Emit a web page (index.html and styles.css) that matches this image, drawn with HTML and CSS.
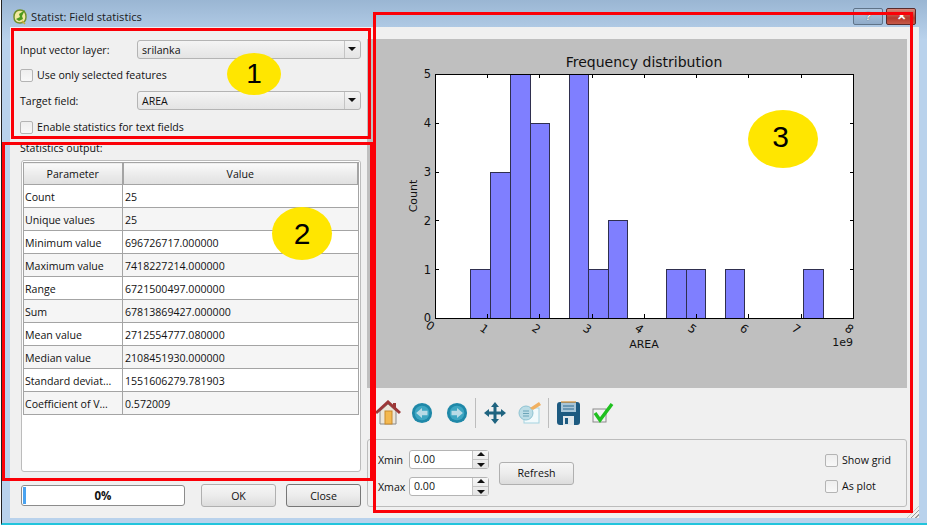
FILE: index.html
```html
<!DOCTYPE html>
<html lang="en">
<head>
<meta charset="utf-8">
<title>Statist: Field statistics</title>
<link rel="stylesheet" href="styles.css">
</head>
<body>
<div class="window">
  <header class="titlebar">
    <svg class="app-icon" width="14" height="16" viewBox="0 0 14 16">
      <path d="M7 1 C3 1 1 4 1 8 C1 12 3 14 7 14 C11 14 13 12 13 8 C13 4 11 1 7 1Z" fill="#f2e9a0" stroke="#6f8f2a" stroke-width="1.4"/>
      <path d="M3 10 L7 8 L6 5 L12 1 L9 7 L10 10 L6 12Z" fill="#4d9a1e"/>
      <path d="M9 12 L12 15" stroke="#c9b23a" stroke-width="1.6"/>
    </svg>
    <span class="title-text">Statist: Field statistics</span>
    <div class="caption-buttons">
      <div class="cap-btn cap-help">?</div>
      <div class="cap-btn cap-close">✕</div>
    </div>
  </header>
  <main class="content">
    <section class="left">
      <div class="form-row row-first">
        <label class="form-label">Input vector layer:</label>
        <div class="combo"><span class="combo-text">srilanka</span><span class="combo-arrow"></span></div>
      </div>
      <div class="check-row row-check1"><span class="check"></span><span>Use only selected features</span></div>
      <div class="form-row row-target">
        <label class="form-label">Target field:</label>
        <div class="combo"><span class="combo-text">AREA</span><span class="combo-arrow"></span></div>
      </div>
      <div class="check-row row-check2"><span class="check"></span><span>Enable statistics for text fields</span></div>
      <div class="stats-label">Statistics output:</div>
      <div class="table-frame">
        <table class="stats">
          <colgroup><col class="col-param"><col class="col-value"></colgroup>
          <thead><tr><th>Parameter</th><th>Value</th></tr></thead>
          <tbody>
            <tr><td>Count</td><td>25</td></tr>
            <tr><td>Unique values</td><td>25</td></tr>
            <tr><td>Minimum value</td><td>696726717.000000</td></tr>
            <tr><td>Maximum value</td><td>7418227214.000000</td></tr>
            <tr><td>Range</td><td>6721500497.000000</td></tr>
            <tr><td>Sum</td><td>67813869427.000000</td></tr>
            <tr><td>Mean value</td><td>2712554777.080000</td></tr>
            <tr><td>Median value</td><td>2108451930.000000</td></tr>
            <tr><td>Standard deviat...</td><td>1551606279.781903</td></tr>
            <tr><td>Coefficient of V...</td><td>0.572009</td></tr>
          </tbody>
        </table>
      </div>
      <div class="actions">
        <div class="progress"><span class="progress-fill"></span><span class="progress-text">0%</span></div>
        <button class="btn btn-ok">OK</button>
        <button class="btn btn-close">Close</button>
      </div>
    </section>
    <section class="right">
      <div class="plot">
        <svg class="chart" width="540" height="349" viewBox="367 39 540 349">
          <text class="t-title" x="644" y="67" text-anchor="middle">Frequency distribution</text>
          <rect x="435.5" y="74.5" width="418" height="244" fill="#fff"/>
          <g class="bars">
            <rect x="470.5" y="269.5" width="20" height="49"/>
            <rect x="490.5" y="172.5" width="20" height="146"/>
            <rect x="510.5" y="74.5" width="20" height="244"/>
            <rect x="530.5" y="123.5" width="19" height="195"/>
            <rect x="569.5" y="74.5" width="19" height="244"/>
            <rect x="588.5" y="269.5" width="20" height="49"/>
            <rect x="608.5" y="220.5" width="19" height="98"/>
            <rect x="666.5" y="269.5" width="20" height="49"/>
            <rect x="686.5" y="269.5" width="19" height="49"/>
            <rect x="725.5" y="269.5" width="19" height="49"/>
            <rect x="803.5" y="269.5" width="20" height="49"/>
          </g>
          <rect x="435.5" y="74.5" width="418" height="244" fill="none" stroke="#000" stroke-width="1"/>
          <path class="ticks" d="M487.5 318v-4M539.5 318v-4M592.5 318v-4M644.5 318v-4M696.5 318v-4M748.5 318v-4M801.5 318v-4M487.5 74v4M539.5 74v4M592.5 74v4M644.5 74v4M696.5 74v4M748.5 74v4M801.5 74v4M435 269.5h4M435 220.5h4M435 172.5h4M435 123.5h4M854 269.5h-4M854 220.5h-4M854 172.5h-4M854 123.5h-4"/>
          <g class="t-axis" text-anchor="end">
            <text x="431" y="78">5</text>
            <text x="431" y="127">4</text>
            <text x="431" y="176">3</text>
            <text x="431" y="225">2</text>
            <text x="431" y="274">1</text>
            <text x="431" y="322">0</text>
          </g>
          <g class="t-axis" text-anchor="middle">
            <text transform="translate(428 329) rotate(35)">0</text>
            <text transform="translate(482 332) rotate(35)">1</text>
            <text transform="translate(534 332) rotate(35)">2</text>
            <text transform="translate(585 332) rotate(35)">3</text>
            <text transform="translate(637 332) rotate(35)">4</text>
            <text transform="translate(690 332) rotate(35)">5</text>
            <text transform="translate(742 332) rotate(35)">6</text>
            <text transform="translate(794 332) rotate(35)">7</text>
            <text transform="translate(847 332) rotate(35)">8</text>
          </g>
          <text class="t-label" x="644" y="348" text-anchor="middle">AREA</text>
          <text class="t-label" x="853" y="346" text-anchor="end">1e9</text>
          <text class="t-label" transform="translate(417 196) rotate(-90)" text-anchor="middle">Count</text>
        </svg>
      </div>
      <div class="toolbar">
        <svg class="tool tool-home" width="26" height="26" viewBox="0 0 26 26">
          <path d="M5 11 V24 H21 V11 L13 4Z" fill="#ece6da" stroke="#8a8a8a"/>
          <rect x="10" y="11" width="7" height="13" fill="#f4b84e" stroke="#c88a2c"/>
          <path d="M1 13 L13 2 L25 13" fill="none" stroke="#9c3838" stroke-width="3"/>
          <rect x="18" y="3" width="3" height="5" fill="#9c3838"/>
        </svg>
        <svg class="tool tool-back" width="22" height="22" viewBox="0 0 24 24">
          <circle cx="12" cy="12" r="11" fill="#1f88a8"/>
          <circle cx="12" cy="12" r="8" fill="#3da6c2"/>
          <path d="M5.5 12 L12 6.5 V9.5 H18 V14.5 H12 V17.5Z" fill="#b8dbe6"/>
        </svg>
        <svg class="tool tool-forward" width="22" height="22" viewBox="0 0 24 24">
          <circle cx="12" cy="12" r="11" fill="#1f88a8"/>
          <circle cx="12" cy="12" r="8" fill="#3da6c2"/>
          <path d="M18.5 12 L12 6.5 V9.5 H6 V14.5 H12 V17.5Z" fill="#b8dbe6"/>
        </svg>
        <span class="tool-sep sep-a"></span>
        <svg class="tool tool-pan" width="24" height="24" viewBox="0 0 24 24">
          <path d="M12 1 L16 6 H13.5 V10.5 H18 V8 L23 12 L18 16 V13.5 H13.5 V18 H16 L12 23 L8 18 H10.5 V13.5 H6 V16 L1 12 L6 8 V10.5 H10.5 V6 H8Z" fill="#1f6480"/>
        </svg>
        <svg class="tool tool-edit" width="26" height="26" viewBox="0 0 26 26">
          <rect x="7" y="8" width="15" height="15" fill="#f2fafc" stroke="#a5d3e0"/>
          <circle cx="9" cy="13" r="7" fill="#bcdde6" stroke="#8ec3d2"/>
          <path d="M6 11h6M6 13.5h6M6 16h6" stroke="#6ba4b8"/>
          <path d="M13 8 L22 2 L24 5 L16 10Z" fill="#f0b060"/>
        </svg>
        <span class="tool-sep sep-b"></span>
        <svg class="tool tool-save" width="25" height="25" viewBox="0 0 25 25">
          <rect x="1" y="1" width="23" height="23" rx="3" fill="#1d5a80"/>
          <rect x="5" y="2" width="15" height="9" fill="#a9c6d8"/>
          <path d="M7 5h11M7 8h11" stroke="#2d6b90"/>
          <rect x="7" y="15" width="11" height="9" fill="#dfe6ea"/>
          <rect x="9" y="17" width="3" height="6" fill="#1d5a80"/>
          <path d="M5 1h15" stroke="#d9a35a" stroke-width="1.5"/>
        </svg>
        <svg class="tool tool-check" width="26" height="24" viewBox="0 0 26 24">
          <rect x="3" y="8" width="13" height="13" fill="#f2f2f2" stroke="#8a8a8a"/>
          <path d="M5 12 L10 19 L22 3" fill="none" stroke="#1fc01f" stroke-width="3.4"/>
        </svg>
      </div>
      <div class="group">
        <div class="spins">
          <div class="spin-row"><label class="spin-label">Xmin</label><div class="spin"><span class="spin-val">0.00</span><span class="spin-btns"><i class="up"></i><i class="down"></i></span></div></div>
          <div class="spin-row"><label class="spin-label">Xmax</label><div class="spin"><span class="spin-val">0.00</span><span class="spin-btns"><i class="up"></i><i class="down"></i></span></div></div>
        </div>
        <button class="btn btn-refresh">Refresh</button>
        <div class="opts">
          <div class="check-row"><span class="check"></span><span>Show grid</span></div>
          <div class="check-row"><span class="check"></span><span>As plot</span></div>
        </div>
      </div>
      <div class="grip"></div>
    </section>
  </main>
  <div class="mark mark-1"></div>
  <div class="mark mark-2"></div>
  <div class="mark mark-3"></div>
  <div class="badge badge-1">1</div>
  <div class="badge badge-2">2</div>
  <div class="badge badge-3">3</div>
</div>
</body>
</html>
```
FILE: styles.css
```css
* { box-sizing: border-box; }
html, body { margin: 0; padding: 0; }
body {
  width: 927px; height: 525px; overflow: hidden; background: #fff;
  font-family: "Open Sans", "Noto Sans", sans-serif; font-size: 10.6px; color: #111;
}
.window {
  position: relative; height: 525px; display: flex; flex-direction: column;
  margin-left: 1px; border-left: 1px solid #222; border-bottom: 2px solid #22c4dc;
  background: linear-gradient(#9ab6d3 0, #b9d2ec 40px, #b9d2ec 100%);
  padding: 0 8px 5px 8px; width: 926px;
}
.titlebar { height: 27px; flex: none; display: flex; align-items: center; padding-left: 3px; position: relative; }
.app-icon { margin-top: 6px; flex: none; }
.title-text { margin-left: 4px; margin-top: 6px; font-size: 11.2px; color: #1a1a1a; }
.caption-buttons { margin-left: auto; margin-right: 3px; margin-top: 6px; display: flex; gap: 3px; }
.cap-btn {
  width: 30px; height: 17px; border: 1px solid #5f7388; border-radius: 2px; text-align: center;
  font: bold 11px/15px "Liberation Sans", sans-serif; color: #fff; background: linear-gradient(#b0c6de, #8fabc9);
}
.cap-help { color: #f4f4f4; text-shadow: 0 0 1px #333; }
.cap-close { background: linear-gradient(#d98a7c, #b43a2c 60%, #c65a48); border-color: #5a2a2a; }
.content { flex: 1; display: flex; background: #f0f0f0; min-height: 0; }
.left { width: 357px; flex: none; padding: 0 6px 0 10px; display: flex; flex-direction: column; }
.form-row { display: flex; align-items: center; height: 19px; }
.row-first { margin-top: 13px; }
.row-target { margin-top: 9px; }
.form-label { width: 117px; flex: none; }
.combo {
  flex: 1; height: 19px; display: flex; align-items: center; border: 1px solid #b4b4b4; border-radius: 3px;
  background: linear-gradient(#f4f4f4, #e4e4e4);
}
.combo-text { flex: 1; padding-left: 4px; }
.combo-arrow {
  width: 16px; height: 17px; border-left: 1px solid #c4c4c4; position: relative; flex: none;
}
.combo-arrow::after {
  content: ""; position: absolute; left: 3px; top: 6px;
  border: 4px solid transparent; border-top: 4px solid #111; border-bottom: 0;
}
.check-row { display: flex; align-items: center; gap: 4px; height: 14px; white-space: nowrap; }
.row-check1 { margin-top: 9px; }
.row-check2 { margin-top: 10px; }
.check {
  width: 13px; height: 13px; border: 1px solid #b4b4b4; border-radius: 2px; flex: none;
  background: linear-gradient(#eee, #f8f8f8);
}
.stats-label { margin-top: 7px; height: 16px; line-height: 15px; }
.table-frame {
  width: 340px; margin-left: 1px; margin-top: 3px; height: 312px; border: 1px solid #bcbcbc; border-radius: 3px;
  background: #fff; padding: 1px;
}
.stats { border-collapse: collapse; table-layout: fixed; width: 336px; font-size: 10.6px; }
.col-param { width: 99px; }
.stats th {
  height: 22px; padding: 0; font-weight: 400; text-align: center; border: 1px solid #a4a4a4; border-right-width: 2px;
  background: linear-gradient(#fafafa, #ececec 50%, #e0e0e0);
}
.stats td { height: 23px; padding: 1px 0 0 1px; border: 1px solid #a4a4a4; white-space: nowrap; overflow: hidden; }
.stats td:nth-child(2) { padding-left: 2px; }
.stats tbody tr:nth-child(even) td { background: #f5f5f5; }
.actions { display: flex; align-items: center; margin-top: 12px; margin-left: 1px; width: 340px; }
.progress {
  position: relative; width: 164px; height: 21px; border: 1px solid #8c8c8c; border-radius: 3px; background: #fff;
  text-align: center; font-weight: 700; font-size: 11.5px; line-height: 19px;
}
.progress-fill { position: absolute; left: 1px; top: 1px; bottom: 1px; width: 3px; background: #4aa3f0; }
.btn {
  height: 23px; border: 1px solid #b0b0b0; border-radius: 3px; padding: 0;
  background: linear-gradient(#f6f6f6, #ececec 50%, #dcdcdc); font: inherit; color: #111;
}
.btn-ok { width: 75px; margin-left: 16px; }
.btn-close { width: 75px; margin-left: 10px; border-color: #777; }
.right { flex: 1; min-width: 0; display: flex; flex-direction: column; position: relative; }
.plot { margin-top: 12px; width: 540px; height: 349px; background: #bfbfbf; flex: none; }
.chart { display: block; font-family: "DejaVu Sans", sans-serif; }
.bars rect { fill: #7f7fff; stroke: #2f2f4f; stroke-width: 1; }
.ticks { stroke: #000; stroke-width: 1; fill: none; }
.t-title { font-size: 14px; fill: #111; }
.t-axis { font-size: 11.5px; fill: #111; }
.t-label { font-size: 11px; fill: #111; }
.toolbar { height: 50px; flex: none; display: flex; align-items: center; padding-left: 8px; margin-top: 1px; }
.tool { flex: none; margin-top: -2px; }
.tool-back { margin-left: 10px; }
.tool-forward { margin-left: 13px; }
.tool-pan { margin-left: 7px; }
.tool-edit { margin-left: 10px; }
.tool-save { margin-left: 7px; }
.tool-check { margin-left: 9px; }
.tool-sep { width: 1px; height: 30px; background: #bdbdbd; margin-top: -2px; flex: none; }
.sep-a { margin-left: 7px; }
.sep-b { margin-left: 5px; }
.group {
  width: 540px; height: 68px; border: 1px solid #bcbcbc; border-radius: 3px;
  display: flex; align-items: center; flex: none;
}
.spins { display: flex; flex-direction: column; gap: 9px; margin-left: 10px; flex: none; }
.spin-row { display: flex; align-items: center; height: 18px; }
.spin-label { width: 31px; flex: none; }
.spin {
  width: 80px; height: 19px; display: flex; border: 1px solid #b4b4b4; border-radius: 3px; background: #fff;
}
.spin-val { flex: 1; padding-left: 4px; line-height: 17px; }
.spin-btns { width: 16px; border-left: 1px solid #c4c4c4; display: flex; flex-direction: column; background: linear-gradient(#f6f6f6, #e4e4e4); }
.spin-btns i { flex: 1; position: relative; display: block; }
.up::after, .down::after { content: ""; position: absolute; left: 4px; border: 4px solid transparent; }
.up::after { top: 1px; border-bottom-color: #111; border-top: 0; }
.down::after { top: 3px; border-top-color: #111; border-bottom: 0; }
.up { border-bottom: 1px solid #c4c4c4; }
.btn-refresh { width: 75px; margin-left: 10px; margin-top: 0; flex: none; }
.opts { margin-left: auto; margin-right: 11px; display: flex; flex-direction: column; gap: 12px; width: 70px; }
.grip {
  position: absolute; right: 0; bottom: 0; width: 12px; height: 12px;
  background: repeating-linear-gradient(135deg, #f0f0f0 0 2px, #9a9a9a 2px 3px);
  clip-path: polygon(100% 0, 100% 100%, 0 100%);
}
.mark { position: absolute; border: 3px solid #fb0007; pointer-events: none; }
.mark-1 { left: 9px; top: 28px; width: 360px; height: 111px; }
.mark-2 { left: 0; top: 142px; width: 371px; height: 339px; }
.mark-3 { left: 371px; top: 12px; width: 540px; height: 501px; }
.badge {
  position: absolute; background: #ffe600; border-radius: 50%; display: flex; align-items: center; justify-content: center;
  font-family: "Liberation Sans", sans-serif; color: #000;
}
.badge-1 { left: 225px; top: 53px; width: 54px; height: 42px; font-size: 28px; }
.badge-2 { left: 270px; top: 207px; width: 60px; height: 53px; font-size: 30px; }
.badge-3 { left: 746px; top: 110px; width: 70px; height: 58px; font-size: 30px; padding: 0 5px 4px 0; }
```
